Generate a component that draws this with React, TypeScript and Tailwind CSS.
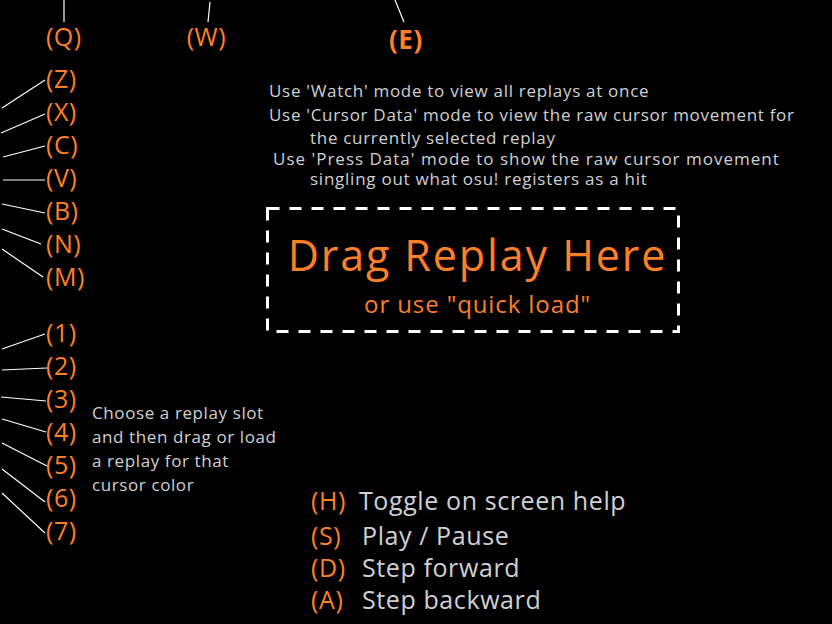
import React from "react";

const keyLines: [number, number, number, number][] = [
  [64, 0, 64, 22],
  [210, 2, 208, 22],
  [395, 0, 404, 22],
  [2, 108, 45, 80],
  [1, 133, 45, 114],
  [3, 157, 45, 146],
  [3, 180, 45, 180],
  [2, 204, 45, 213],
  [2, 229, 41, 244],
  [2, 249, 43, 277],
  [2, 349, 45, 334],
  [2, 370, 47, 368],
  [1, 397, 46, 401],
  [2, 419, 46, 432],
  [2, 443, 47, 466],
  [2, 469, 45, 502],
  [2, 493, 45, 533],
];

const letters = ["Z", "X", "C", "V", "B", "N", "M"];
const numbers = ["1", "2", "3", "4", "5", "6", "7"];

const help: [string, string, string, string][] = [
  ["H", "Toggle on screen help", "ml-0", "h-[35px] leading-[33px]"],
  ["S", "Play / Pause", "ml-[3px]", "h-[32px] leading-[32px]"],
  ["D", "Step forward", "ml-[3px]", "h-[32px] leading-[32px]"],
  ["A", "Step backward", "ml-[3px]", "h-[32px] leading-[32px]"],
];

function KeyList({ keys }: { keys: string[] }) {
  return (
    <div className="flex flex-col text-[#ff7f27] text-[25px] tracking-[0.5px]">
      {keys.map((k) => (
        <span key={k} className="h-[33px] leading-[33px] whitespace-nowrap">
          ({k})
        </span>
      ))}
    </div>
  );
}

export default function App() {
  return (
    <div
      className="relative w-[832px] h-[624px] bg-black overflow-hidden text-[#d0d0d4] flex flex-col"
      style={{ fontFamily: '"Open Sans", "Noto Sans", sans-serif' }}
    >
      <svg className="absolute inset-0 pointer-events-none" width="832" height="624">
        {keyLines.map(([x1, y1, x2, y2], i) => (
          <line key={i} x1={x1} y1={y1} x2={x2} y2={y2} stroke="#ffffff" strokeWidth="1.2" />
        ))}
      </svg>

      {/* top keys */}
      <div className="h-[62px] pt-[19px] flex items-start text-[#ff7f27] text-[25px] tracking-[0.5px] leading-[34px]">
        <span className="ml-[46px]">(Q)</span>
        <span className="ml-[105px]">(W)</span>
        <span className="ml-[163px] mt-[3px] font-bold text-[26px]">(E)</span>
      </div>

      <div className="flex flex-1">
        {/* left column */}
        <div className="w-[266px] shrink-0 pl-[46px] flex flex-col">
          <KeyList keys={letters} />
          <div className="mt-[23px] flex">
            <div className="w-[46px] shrink-0">
              <KeyList keys={numbers} />
            </div>
            <div className="mt-[85px] text-[17px] leading-[24px] tracking-[0.6px] whitespace-nowrap">
              <div>Choose a replay slot</div>
              <div>and then drag or load</div>
              <div>a replay for that</div>
              <div>cursor color</div>
            </div>
          </div>
        </div>

        {/* right column */}
        <div className="flex flex-col">
          <div className="pt-[17px] pl-[3px] text-[17px] tracking-[0.7px] whitespace-nowrap">
            <div className="h-[24px] leading-[24px]">Use 'Watch' mode to view all replays at once</div>
            <div className="h-[24px] leading-[24px]">Use 'Cursor Data' mode to view the raw cursor movement for</div>
            <div className="h-[21px] leading-[21px] pl-[41px]">the currently selected replay</div>
            <div className="h-[21px] leading-[21px] pl-[4px] font-medium tracking-[1px]">
              Use 'Press Data' mode to show the raw cursor movement
            </div>
            <div className="h-[20px] leading-[20px] pl-[41px] font-medium tracking-[0.75px]">
              singling out what osu! registers as a hit
            </div>
          </div>

          {/* drop zone */}
          <div className="relative mt-[18px] w-[414px] h-[126px] pt-[24px] pl-[9px] flex flex-col items-center text-[#ff7f27] whitespace-nowrap">
            <svg className="absolute inset-0" width="414" height="126">
              <rect
                x="1.5"
                y="1.5"
                width="411"
                height="123"
                fill="none"
                stroke="#ffffff"
                strokeWidth="3"
                strokeDasharray="12 10"
              />
            </svg>
            <div className="text-[43px] leading-[48px] tracking-[1.9px]">Drag Replay Here</div>
            <div className="mt-[10px] text-[24px] leading-[30px] tracking-[0.9px]">or use "quick load"</div>
          </div>

          {/* bottom help */}
          <div className="mt-[151px] ml-[45px] flex flex-col text-[25px] tracking-[0.6px] whitespace-nowrap">
            {help.map(([k, t, m, h]) => (
              <div key={k} className={`flex ${h}`}>
                <span className="w-[48px] text-[#ff7f27]">({k})</span>
                <span className={m}>{t}</span>
              </div>
            ))}
          </div>
        </div>
      </div>
    </div>
  );
}
